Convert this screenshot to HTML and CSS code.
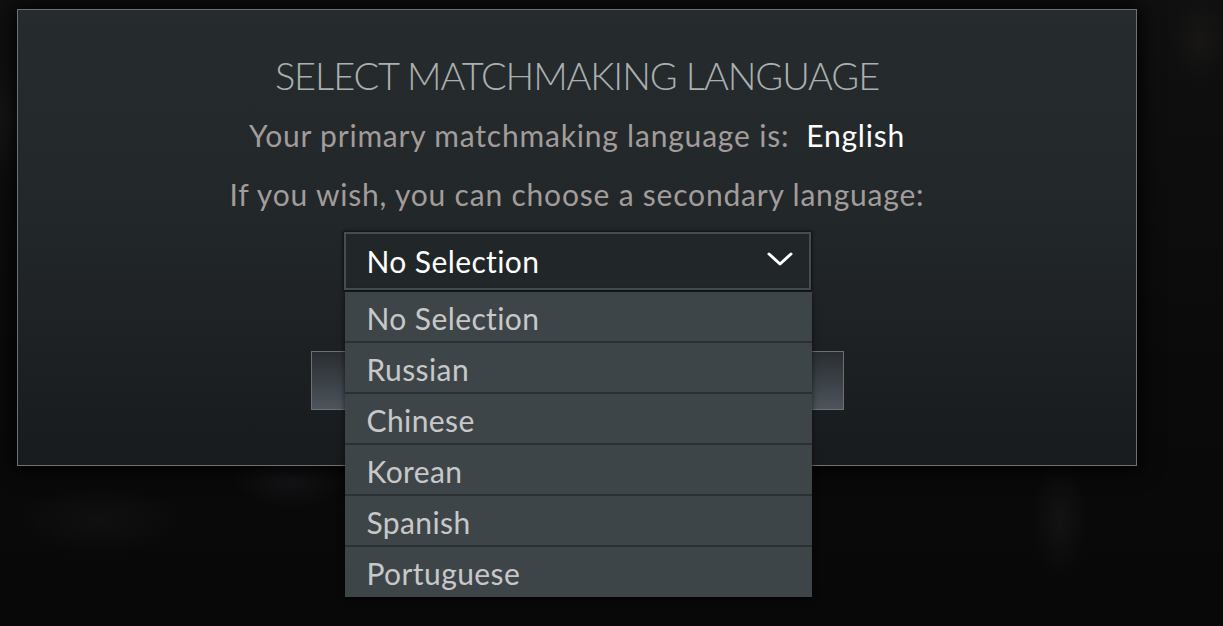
FILE: index.html
```html
<!DOCTYPE html>
<html lang="en">
<head>
<meta charset="utf-8">
<title>Select Matchmaking Language</title>
<link rel="stylesheet" href="styles.css">
</head>
<body>
<div class="scene">
  <div class="dialog">
    <h1 class="title">SELECT MATCHMAKING LANGUAGE</h1>
    <p class="line line-primary">Your primary matchmaking language is:&nbsp; <span class="hl">English</span></p>
    <p class="line line-secondary">If you wish, you can choose a secondary language:</p>
    <div class="select-wrap">
      <div class="select">
        <span class="select-value">No Selection</span>
        <svg class="chevron" width="28" height="16" viewBox="0 0 28 16" aria-hidden="true">
          <path d="M3 3 L14 13 L25 3" fill="none" stroke="#ffffff" stroke-width="3" stroke-linecap="round" stroke-linejoin="round"/>
        </svg>
      </div>
      <ul class="menu">
        <li class="menu-item">No Selection</li>
        <li class="menu-item">Russian</li>
        <li class="menu-item">Chinese</li>
        <li class="menu-item">Korean</li>
        <li class="menu-item">Spanish</li>
        <li class="menu-item">Portuguese</li>
      </ul>
    </div>
    <div class="actions">
      <div class="btn"></div>
    </div>
  </div>
</div>
</body>
</html>
```

FILE: styles.css
```css
html, body {
  margin: 0;
  padding: 0;
}

body {
  width: 1223px;
  height: 626px;
  overflow: hidden;
  background-color: #090909;
  font-family: "Lato", "Open Sans", "Liberation Sans", sans-serif;
}

.scene {
  width: 1223px;
  height: 626px;
  padding-top: 9px;
  padding-left: 17px;
  box-sizing: border-box;
  background:
    radial-gradient(ellipse 60px 80px at 1090px 60px, rgba(40,36,32,0.45), transparent 70%),
    radial-gradient(ellipse 40px 60px at 1200px 40px, rgba(40,36,32,0.35), transparent 70%),
    radial-gradient(ellipse 80px 40px at 290px 480px, rgba(40,40,48,0.35), transparent 70%),
    radial-gradient(ellipse 40px 80px at 1060px 520px, rgba(34,34,34,0.4), transparent 70%),
    radial-gradient(ellipse 120px 50px at 100px 520px, rgba(28,30,28,0.35), transparent 70%),
    radial-gradient(ellipse 40px 90px at 8px 120px, rgba(30,30,30,0.5), transparent 70%),
    linear-gradient(180deg, #101010 0%, #0a0a0a 60%, #080808 100%);
}

.dialog {
  position: relative;
  width: 1120px;
  height: 457px;
  box-sizing: border-box;
  border: 1px solid #6c7173;
  background: linear-gradient(180deg, #262b2d 0%, #22272a 45%, #181b1d 100%);
  box-shadow: 0 0 18px 4px rgba(0, 0, 0, 0.85);
  display: flex;
  flex-direction: column;
  align-items: center;
  padding-top: 45px;
}

.title {
  margin: 0;
  font-weight: 300;
  font-size: 38px;
  line-height: 40px;
  color: #aab0b0;
  letter-spacing: -1.1px;
  white-space: nowrap;
}

.line {
  margin: 0;
  font-size: 30px;
  line-height: 34px;
  letter-spacing: 0.8px;
  color: #a29c9a;
  white-space: nowrap;
}

.line-primary {
  margin-top: 23px;
}

.line-secondary {
  margin-top: 25px;
}

.hl {
  color: #ffffff;
}

.select-wrap {
  position: relative;
  margin-top: 21px;
  width: 467px;
}

.select {
  height: 54px;
  border: 2px solid #464c4f;
  background: #212628;
  box-shadow: 0 0 3px 1px rgba(0, 0, 0, 0.6);
  display: flex;
  align-items: center;
  justify-content: space-between;
  padding: 0 15px 0 21px;
}

.select-value {
  font-size: 30px;
  line-height: 54px;
  letter-spacing: 0.4px;
  color: #ffffff;
}

.chevron {
  display: block;
  margin-top: -4px;
}

.menu {
  position: absolute;
  top: 60px;
  left: 1px;
  width: 467px;
  margin: 0;
  padding: 0 0 1px;
  list-style: none;
  background: #3e4548;
  box-shadow: 0 2px 6px rgba(0, 0, 0, 0.6);
  z-index: 2;
}

.menu-item {
  height: 45px;
  padding: 4px 0 0 22px;
  font-size: 30px;
  line-height: 45px;
  letter-spacing: 0.4px;
  color: #c8c8c8;
  border-bottom: 2px solid #2b3033;
}

.menu-item:last-child {
  border-bottom: none;
}

.actions {
  margin-top: 61px;
  display: flex;
  justify-content: center;
}

.btn {
  width: 531px;
  height: 57px;
  border: 1px solid #6a7073;
  background:
    linear-gradient(155deg, transparent 0 40%, rgba(255,255,255,0.05) 41%, transparent 43% 100%),
    linear-gradient(25deg, transparent 0 55%, rgba(255,255,255,0.05) 56%, transparent 58% 100%),
    linear-gradient(180deg, #2a2e33 0%, #3a4046 50%, #4d545b 100%);
}
```
